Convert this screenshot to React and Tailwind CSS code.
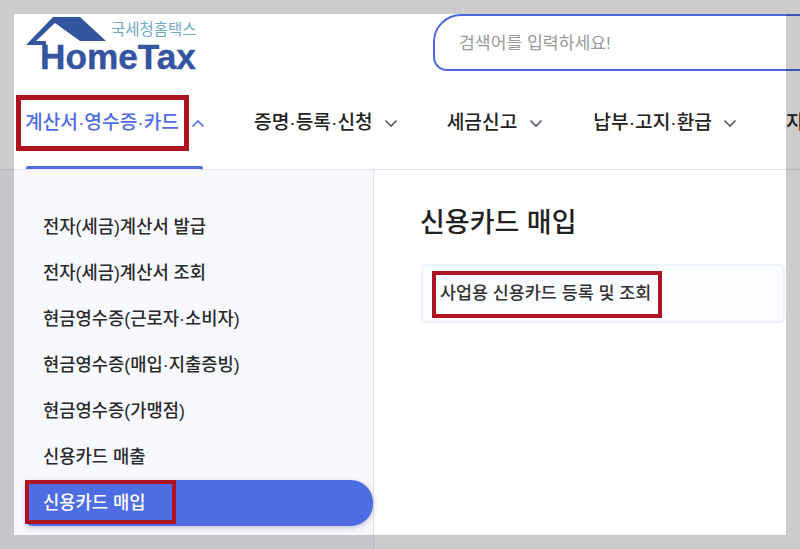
import React from "react";

const font = { fontFamily: '"Liberation Sans", "Noto Sans CJK KR", sans-serif' };

function Chev({ up }) {
  return (
    <svg width="14" height="9" viewBox="0 0 14 9" fill="none" className={up ? "text-[#4f6de3]" : "text-[#555a66]"}>
      <path d={up ? "M1.5 7.5 7 2l5.5 5.5" : "M1.5 1.5 7 7l5.5-5.5"} stroke="currentColor" strokeWidth="1.6" />
    </svg>
  );
}

function Logo() {
  return (
    <div className="relative w-[172px] h-[56px] shrink-0">
      <svg width="82" height="32" viewBox="0 0 82 32" className="absolute left-[12px] top-[2px]">
        <path d="M27 1H54L80 25H54L29 7L10 25H20V29H0Z" fill="#33549f" />
      </svg>
      <span className="absolute left-[97px] top-[6px] whitespace-nowrap text-[15.5px] leading-[20px] text-[#6fa9c4]">국세청홈택스</span>
      <span className="absolute left-[26px] top-[21px] text-[35.2px] leading-[44px] font-bold text-[#33549f] [-webkit-text-stroke:0.4px_#33549f]">
        HomeTax
      </span>
    </div>
  );
}

const menus = [
  "전자(세금)계산서 발급",
  "전자(세금)계산서 조회",
  "현금영수증(근로자·소비자)",
  "현금영수증(매입·지출증빙)",
  "현금영수증(가맹점)",
  "신용카드 매출",
];

export default function App() {
  return (
    <div className="relative w-[800px] h-[549px] overflow-hidden bg-white flex flex-col" style={font}>
      <div className="h-[170px] shrink-0 border-b border-[#e6e6ea] flex flex-col pt-[14px] pl-[14px]">
        <div className="h-[73px] flex shrink-0">
          <Logo />
          <div className="ml-[247px] w-[400px] shrink-0 h-[57px] border-2 border-[#4a69e0] rounded-tl-[28px] rounded-bl-[14px] flex items-center pl-[24px] pt-[3px] text-[17.2px] text-[#9a9a9a]">
            검색어를 입력하세요!
          </div>
        </div>
        <div className="relative flex-1 flex items-start pt-[22px] whitespace-nowrap text-[19.2px] leading-[28px] font-medium text-[#222] pl-[11px]">
          <span className="text-[#4f6de3]">계산서·영수증·카드</span>
          <span className="ml-[12px] mt-[10px]"><Chev up /></span>
          <span className="ml-[49px]">증명·등록·신청</span>
          <span className="ml-[11px] mt-[10px]"><Chev /></span>
          <span className="ml-[49px]">세금신고</span>
          <span className="ml-[12px] mt-[10px]"><Chev /></span>
          <span className="ml-[50px]">납부·고지·환급</span>
          <span className="ml-[11px] mt-[10px]"><Chev /></span>
          <span className="ml-[49px]">지</span>
          <div className="absolute left-[12px] bottom-0 w-[177px] h-[3px] rounded-t-[2px] bg-[#4f6de3]" />
        </div>
      </div>
      <div className="flex-1 flex">
        <div className="w-[374px] shrink-0 bg-[#f8f9ff] border-r border-[#dfe3f0] pt-[34px] pl-[26px]">
          {menus.map((m) => (
            <div key={m} className="h-[46px] pl-[17px] pt-[1px] flex items-center text-[17.7px] font-medium text-[#2a2a2a]">
              {m}
            </div>
          ))}
          <div className="w-[347px] h-[46px] pl-[17px] flex items-center text-[17.7px] font-medium text-white bg-[#4f6de3] rounded-r-[22px] rounded-bl-[6px] shadow-[0_2px_6px_rgba(60,70,120,0.3)]">
            신용카드 매입
          </div>
        </div>
        <div className="flex-1 pt-[34px] pl-[46px]">
          <h2 className="text-[27px] leading-[38px] font-medium text-[#222]">신용카드 매입</h2>
          <div className="mt-[22px] ml-[1px] w-[364px] h-[59px] rounded-[5px] border-2 border-[#ecf1fd] bg-[#fbfcff] pl-[17px] flex items-center text-[17.4px] font-medium text-[#333]">
            사업용 신용카드 등록 및 조회
          </div>
        </div>
      </div>
      {/* dimming backdrop around the highlighted window */}
      <div className="absolute left-0 top-0 w-full h-[14px] bg-black/20" />
      <div className="absolute left-0 bottom-0 w-full h-[14px] bg-black/20" />
      <div className="absolute left-0 top-[14px] w-[14px] h-[521px] bg-black/20" />
      <div className="absolute right-0 top-[14px] w-[14px] h-[521px] bg-black/20" />
      {/* red annotation boxes */}
      <div className="absolute left-[16px] top-[95px] w-[173px] h-[56px] border-[5px] border-[#ad1320]" />
      <div className="absolute left-[25px] top-[480px] w-[151px] h-[44px] border-[4px] border-[#ad1320]" />
      <div className="absolute left-[432px] top-[271px] w-[230px] h-[47px] border-[4px] border-[#ad1320]" />
    </div>
  );
}
